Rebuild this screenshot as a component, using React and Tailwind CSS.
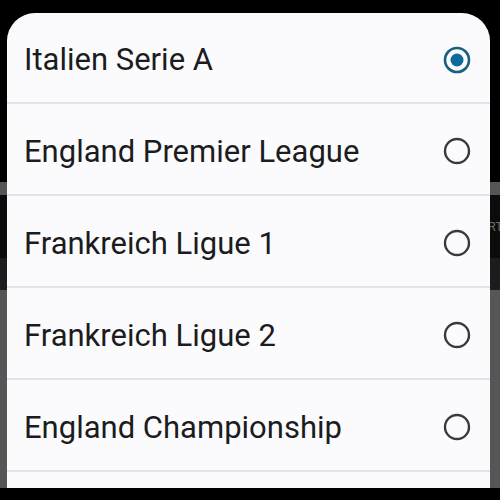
import React, { useState } from 'react';

const leagues = [
    'Italien Serie A',
    'England Premier League',
    'Frankreich Ligue 1',
    'Frankreich Ligue 2',
    'England Championship',
];

const Radio = ({ checked }) => (
    <svg width="30" height="30" viewBox="0 0 30 30">
        {checked ? (
            <>
                <circle cx="15" cy="15" r="12" fill="none" stroke="#19617a" strokeWidth="2.6" />
                <circle cx="15" cy="15" r="6.5" fill="#0e6a9a" />
            </>
        ) : (
            <circle cx="15" cy="15" r="12" fill="none" stroke="#3a3a3c" strokeWidth="2.4" />
        )}
    </svg>
);

export default function App() {
    const [selected, setSelected] = useState(0);

    return (
        <div className="relative w-[500px] h-[500px] overflow-hidden bg-black" style={{ fontFamily: 'Roboto, "Noto Sans", sans-serif' }}>
            {/* Hintergrund (abgedunkelte Seite) */}
            <div className="flex flex-col h-full">
                <div className="h-[182px] bg-black" />
                <div className="h-[13px] bg-[#555555]" />
                <div className="h-[63px] bg-[#0b0b0b] flex items-center justify-end">
                    <span className="text-[13px] leading-none text-[#6a6a6a] -mr-[3px]">RT</span>
                </div>
                <div className="h-[32px] bg-[#1c1c1c]" />
                <div className="h-[198px] bg-[#565656]" />
                <div className="flex-1 bg-black" />
            </div>

            {/* Auswahl-Sheet */}
            <div className="absolute left-[7px] top-[13px] w-[483px] h-[475px] bg-[#fbfbfd] rounded-t-[28px] overflow-hidden">
                {leagues.map((name, i) => (
                    <button
                        key={name}
                        onClick={() => setSelected(i)}
                        className={`w-full flex items-center justify-between pl-[17px] pr-[18px] pt-[4px] border-b-[2px] border-[#e4e4e8] text-left ${i === 0 ? 'h-[91px]' : 'h-[92px]'}`}
                    >
                        <span className="text-[31px] leading-none text-[#1c1c1e]">{name}</span>
                        <Radio checked={selected === i} />
                    </button>
                ))}
            </div>
        </div>
    );
}
